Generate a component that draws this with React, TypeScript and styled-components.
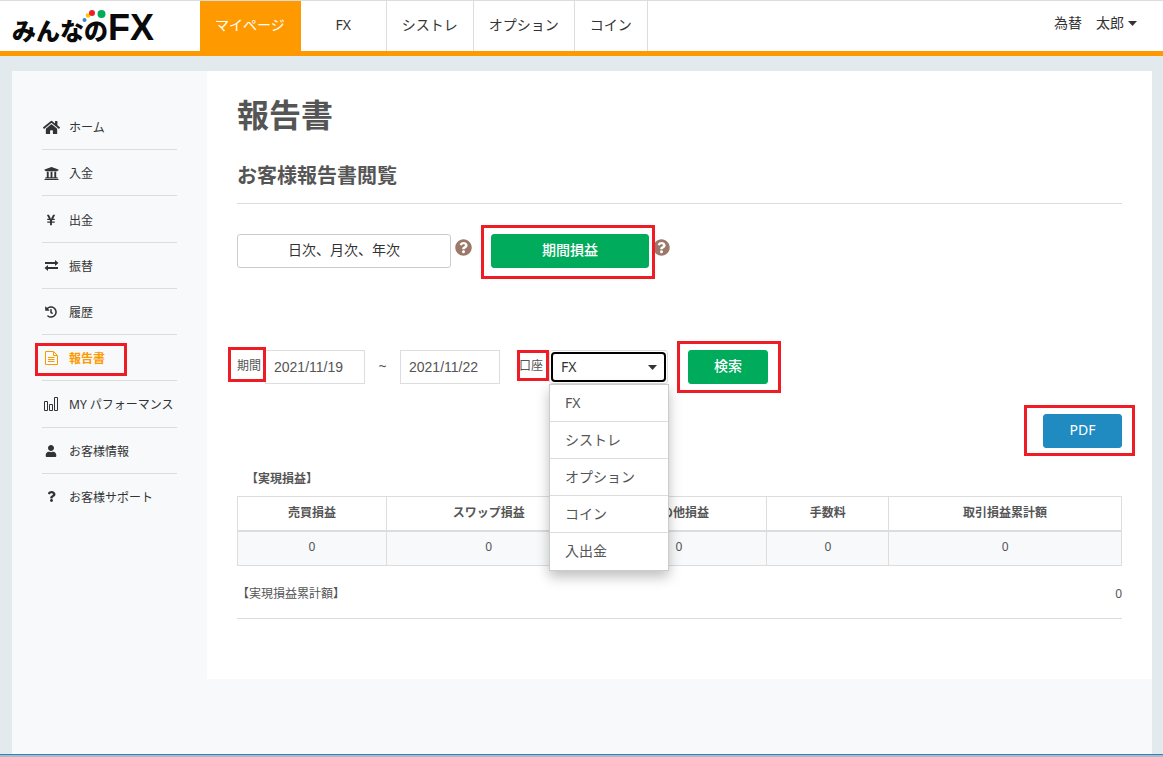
import React from 'react';
import styled, { createGlobalStyle, css } from 'styled-components';
import { FaHistory, FaHome, FaQuestion, FaQuestionCircle, FaUniversity, FaUser, FaYenSign } from 'react-icons/fa';

const color = {
  text: '#333',
  muted: '#555',
  line: '#ddd',
  orange: '#ff9900',
  green: '#00ac5b',
  blue: '#208bc1',
  red: '#ee1c25',
  panel: '#f7f9fb',
  page: '#e2eaed',
  help: '#9b7869',
};

const GlobalStyle = createGlobalStyle`
  *, *::before, *::after { box-sizing: border-box; }
  body {
    margin: 0;
    background: ${color.page};
    color: ${color.text};
    font: 14px/20px "Noto Sans", "Noto Sans CJK JP", sans-serif;
  }
  a { color: inherit; text-decoration: none; }
  button, select { font: inherit; color: inherit; }
  h1, h2, h3, p, ul { margin: 0; padding: 0; }
  ul { list-style: none; }
`;

const Page = styled.div`
  display: flex;
  flex-direction: column;
  min-height: 100vh;
`;

const Header = styled.header`
  display: flex;
  height: 56px;
  background: #fff;
  border-top: 1px solid ${color.line};
  border-bottom: 5px solid ${color.orange};
`;

const LogoLink = styled.a`
  position: relative;
  display: flex;
  align-items: baseline;
  width: 200px;
  padding: 2px 0 0 12px;
  color: #0a0a0a;
  line-height: 50px;
`;

const LogoKana = styled.span`
  font-family: "Noto Sans CJK JP", sans-serif;
  font-size: 24px;
  font-weight: 900;
`;

const LogoLatin = styled.span`
  font-family: "Liberation Sans", sans-serif;
  font-size: 36px;
  font-weight: 700;
`;

const LogoDots = styled.svg`
  position: absolute;
  left: 82px;
  top: 8px;
`;

const Tabs = styled.nav`
  display: flex;
  flex: 1;
`;

const Tab = styled.a<{ $active?: boolean }>`
  min-width: 73px;
  padding: 14px 15px 0;
  border-right: 1px solid ${color.line};
  text-align: center;
  ${p => p.$active && css`
    background: ${color.orange};
    border-color: ${color.orange};
    color: #fff;
  `}
`;

const WideTab = styled(Tab)`
  min-width: 86px;
`;

const UserButton = styled.button`
  display: flex;
  align-items: center;
  gap: 4px;
  height: 44px;
  padding: 0;
  margin-right: 26px;
  border: 0;
  background: none;
`;

const Container = styled.div`
  display: flex;
  flex: 1;
  align-items: flex-start;
  margin: 15px 11px 0 12px;
  background: ${color.panel};
`;

const Sidebar = styled.nav`
  flex: none;
  width: 195px;
  padding: 33px 30px;
`;

const SideList = styled.ul`
  display: grid;
  grid-auto-rows: 1fr;
  height: 416px;
`;

const SideItem = styled.li`
  display: flex;
  align-items: center;
  padding-top: 3px;
  border-bottom: 1px solid ${color.line};
  &:last-child { border-bottom-color: transparent; }
`;

const SideLink = styled.a<{ $active?: boolean }>`
  display: flex;
  align-items: center;
  gap: 9px;
  font-size: 12px;
  white-space: nowrap;
  ${p => p.$active && css`
    color: ${color.orange};
    font-weight: 700;
  `}
`;

const IconSlot = styled.span`
  display: flex;
  justify-content: center;
  width: 18px;
  padding-bottom: 2px;
`;

const Main = styled.main`
  flex: 1;
  min-width: 0;
  padding: 20px 30px 60px;
  background: #fff;
  color: ${color.muted};
`;

const Title = styled.h1`
  font-size: 32px;
  line-height: 48px;
`;

const Subtitle = styled.h2`
  margin-top: 22px;
  padding-bottom: 12px;
  border-bottom: 1px solid ${color.line};
  font-size: 20px;
  line-height: 30px;
`;

const Marked = styled.div<{ $inset: string }>`
  position: relative;
  display: flex;
  &::after {
    content: "";
    position: absolute;
    inset: ${p => p.$inset};
    z-index: 2;
    border: 3px solid ${color.red};
    pointer-events: none;
  }
`;

const Button = styled.button<{ $tone?: 'green' | 'blue'; $width: number }>`
  width: ${p => p.$width}px;
  height: 34px;
  padding: 0 0 2px;
  border: 1px solid ${p => (p.$tone ? color[p.$tone] : '#ccc')};
  border-radius: 3px;
  background: ${p => (p.$tone ? color[p.$tone] : '#fff')};
  color: ${p => (p.$tone ? '#fff' : color.text)};
  font-weight: ${p => (p.$tone === 'green' ? 500 : 400)};
`;

const Modes = styled.div`
  display: flex;
  margin-top: 30px;
`;

const HelpLink = styled.a`
  display: flex;
  margin: 5px 19px 0 4px;
  height: 17px;
  color: ${color.help};
`;

const Filters = styled.form`
  display: flex;
  margin-top: 82px;
`;

const Label = styled.label`
  width: 28px;
  height: 32px;
  font-size: 12px;
  line-height: 32px;
`;

const DateInput = styled.input`
  width: 100px;
  height: 34px;
  padding: 0 8px;
  border: 1px solid ${color.line};
  background: #fff;
  color: ${color.muted};
  font: 14px "Liberation Sans", sans-serif;
`;

const Tilde = styled.span`
  width: 35px;
  line-height: 32px;
  text-align: center;
`;

const Account = styled.div`
  display: flex;
  margin: 0 20px 0 19px;
`;

const SelectWrap = styled.div`
  position: relative;
  width: 119px;
  height: 34px;
  margin-left: 2px;
  padding: 1px;
  border: 1px solid ${color.line};
  border-radius: 3px;
`;

const Select = styled.select`
  display: block;
  width: 100%;
  height: 30px;
  padding: 0 8px;
  appearance: none;
  border: 2px solid #000;
  border-radius: 4px;
  background: #fff;
  color: ${color.text};
  outline: 0;
`;

const SelectCaret = styled.span`
  position: absolute;
  right: 10px;
  top: 0;
  height: 32px;
  display: flex;
  align-items: center;
  pointer-events: none;
`;

const Menu = styled.ul`
  position: absolute;
  left: -1px;
  top: 33px;
  z-index: 3;
  width: 120px;
  border: 1px solid #ccc;
  background: #fff;
  box-shadow: 0 6px 12px rgba(0, 0, 0, 0.25);
`;

const MenuItem = styled.li`
  height: 37px;
  padding: 0 15px;
  border-bottom: 1px solid ${color.line};
  line-height: 36px;
  &:last-child { border-bottom: 0; }
`;

const Actions = styled.div`
  display: flex;
  justify-content: flex-end;
  margin-top: 30px;
`;

const TableTitle = styled.h3`
  margin: 21px 0 7px 9px;
  font-size: 12px;
  line-height: 20px;
`;

const Table = styled.table`
  width: 100%;
  table-layout: fixed;
  border-collapse: collapse;
  font-size: 12px;
  text-align: center;
  th, td {
    height: 35px;
    padding: 0 8px 2px;
    border: 1px solid ${color.line};
  }
  th {
    height: 34px;
    padding-bottom: 0;
    border-bottom-width: 2px;
  }
  td { background: ${color.panel}; }
`;

const Total = styled.p`
  display: flex;
  justify-content: space-between;
  padding: 18px 0 14px;
  border-bottom: 1px solid ${color.line};
  font-size: 12px;
`;

const BottomEdge = styled.footer`
  height: 3px;
  border-top: 1px solid #1f86dc;
  background: #b5b9bc;
`;

const Caret = () => (
  <svg width="9" height="5" viewBox="0 0 9 5" aria-hidden="true">
    <path d="M0 0h9L4.500 5z" fill="#333" />
  </svg>
);

const ExchangeIcon = () => (
  <svg width="15" height="11" viewBox="0 0 15 11" fill="currentColor" aria-hidden="true">
    <path d="M1 2h10V0l3.500 3L11 6V4H1zM14 7H4V5L.5 8 4 11V9h10z" />
  </svg>
);

const FileIcon = () => (
  <svg width="13" height="14" viewBox="0 0 13 14" fill="none" stroke="currentColor" aria-hidden="true">
    <path d="M.5.500h8l4 4v9H.500zM8.500.500v4h4M3 6.500h6.500M3 8.500h6.500M3 10.500h6.500" />
  </svg>
);

const BarsIcon = () => (
  <svg width="15" height="14" viewBox="0 0 15 14" fill="none" stroke="currentColor" aria-hidden="true">
    <path d="M.5 4.500h3v9h-3zM5.500 7.500h3v6h-3zM10.500.500h3v13h-3z" />
  </svg>
);

type SideEntry = { label: string; icon: React.ReactNode; active?: boolean };

const sideEntries: SideEntry[] = [
  { label: 'ホーム', icon: <FaHome size={17} /> },
  { label: '入金', icon: <FaUniversity size={15} /> },
  { label: '出金', icon: <FaYenSign size={12} /> },
  { label: '振替', icon: <ExchangeIcon /> },
  { label: '履歴', icon: <FaHistory size={12} /> },
  { label: '報告書', icon: <FileIcon />, active: true },
  { label: 'MY パフォーマンス', icon: <BarsIcon /> },
  { label: 'お客様情報', icon: <FaUser size={12} /> },
  { label: 'お客様サポート', icon: <FaQuestion size={11} /> },
];

const accounts = ['FX', 'シストレ', 'オプション', 'コイン', '入出金'];

const columns = [
  { title: '売買損益', share: 149 },
  { title: 'スワップ損益', share: 205 },
  { title: 'その他損益', share: 176 },
  { title: '手数料', share: 122 },
  { title: '取引損益累計額', share: 233 },
];
const shareTotal = columns.reduce((sum, c) => sum + c.share, 0);

export default function App() {
  return (
    <Page>
      <GlobalStyle />
      <Header>
        <LogoLink href="#">
          <LogoKana>みんなの</LogoKana>
          <LogoLatin>FX</LogoLatin>
          <LogoDots width="26" height="15" viewBox="0 0 26 15" aria-hidden="true">
            <circle cx="2.500" cy="11" r="2" fill="#3b83cf" />
            <circle cx="6" cy="6.500" r="2.300" fill="#fcc800" />
            <circle cx="10" cy="4" r="3" fill="#e8202a" />
            <circle cx="19.500" cy="5" r="4" fill="#00ac5b" />
          </LogoDots>
        </LogoLink>
        <Tabs>
          <Tab href="#" $active>マイページ</Tab>
          <WideTab href="#">FX</WideTab>
          <Tab href="#">シストレ</Tab>
          <Tab href="#">オプション</Tab>
          <Tab href="#">コイン</Tab>
        </Tabs>
        <UserButton type="button">為替　太郎<Caret /></UserButton>
      </Header>

      <Container>
        <Sidebar>
          <SideList>
            {sideEntries.map(entry => {
              const link = (
                <SideLink href="#" $active={entry.active}>
                  <IconSlot>{entry.icon}</IconSlot>
                  {entry.label}
                </SideLink>
              );
              return (
                <SideItem key={entry.label}>
                  {entry.active ? <Marked $inset="-6px -22px -7px -7px">{link}</Marked> : link}
                </SideItem>
              );
            })}
          </SideList>
        </Sidebar>

        <Main>
          <Title>報告書</Title>
          <Subtitle>お客様報告書閲覧</Subtitle>

          <Modes>
            <Button type="button" $width={214}>日次、月次、年次</Button>
            <HelpLink href="#" aria-label="日次、月次、年次の説明"><FaQuestionCircle size={17} /></HelpLink>
            <Marked $inset="-9px -6px -11px -10px">
              <Button type="button" $tone="green" $width={158}>期間損益</Button>
            </Marked>
            <HelpLink href="#" aria-label="期間損益の説明"><FaQuestionCircle size={17} /></HelpLink>
          </Modes>

          <Filters onSubmit={e => e.preventDefault()}>
            <Marked $inset="-3px -1px 2px -9px">
              <Label htmlFor="from">期間</Label>
            </Marked>
            <DateInput id="from" defaultValue="2021/11/19" />
            <Tilde>~</Tilde>
            <DateInput aria-label="期間の終了日" defaultValue="2021/11/22" />
            <Account>
              <Marked $inset="0 -2px 3px -2px">
                <Label htmlFor="account">口座</Label>
              </Marked>
              <SelectWrap>
                <Select id="account" defaultValue="FX">
                  {accounts.map(name => <option key={name}>{name}</option>)}
                </Select>
                <SelectCaret><Caret /></SelectCaret>
                <Menu>
                  {accounts.map(name => <MenuItem key={name}>{name}</MenuItem>)}
                </Menu>
              </SelectWrap>
            </Account>
            <Marked $inset="-9px -13px -9px -11px">
              <Button type="submit" $tone="green" $width={80}>検索</Button>
            </Marked>
          </Filters>

          <Actions>
            <Marked $inset="-9px -13px -8px -19px">
              <Button type="button" $tone="blue" $width={79}>PDF</Button>
            </Marked>
          </Actions>

          <TableTitle>【実現損益】</TableTitle>
          <Table>
            <colgroup>
              {columns.map(c => <col key={c.title} style={{ width: `${(c.share / shareTotal) * 100}%` }} />)}
            </colgroup>
            <thead>
              <tr>{columns.map(c => <th key={c.title} scope="col">{c.title}</th>)}</tr>
            </thead>
            <tbody>
              <tr>{columns.map(c => <td key={c.title}>0</td>)}</tr>
            </tbody>
          </Table>

          <Total><span>【実現損益累計額】</span><span>0</span></Total>
        </Main>
      </Container>
      <BottomEdge />
    </Page>
  );
}
